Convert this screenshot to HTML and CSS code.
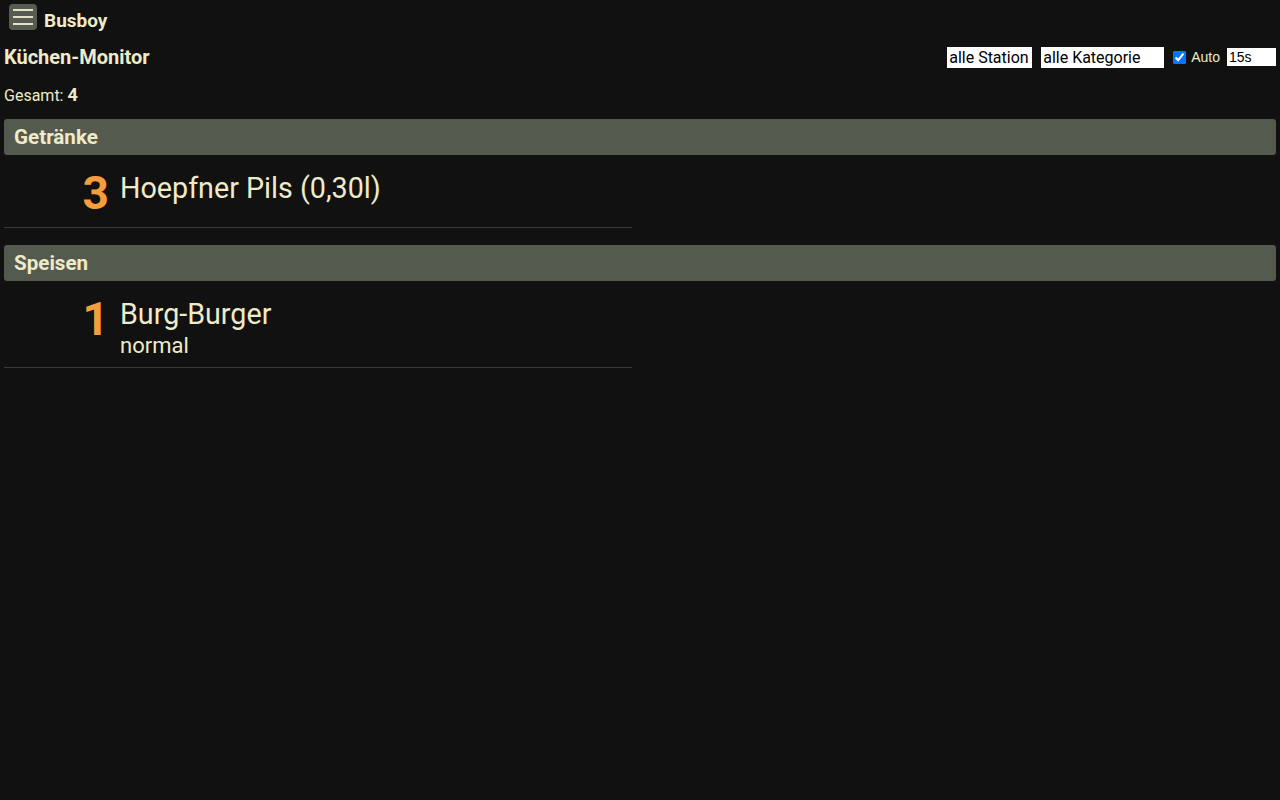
FILE: index.html
```html
<!DOCTYPE html>
<html lang="de">
<head>
<meta charset="utf-8">
<title>Busboy – Küchen-Monitor</title>
<link rel="stylesheet" href="styles.css">
</head>
<body>
<header class="topbar">
  <button class="menu-btn" aria-label="Menü">
    <svg width="20" height="18" viewBox="0 0 20 18"><path d="M0 2h20M0 9h20M0 16h20" stroke="#e3e1c8" stroke-width="2" fill="none"/></svg>
  </button>
  <span class="brand">Busboy</span>
</header>
<div class="titlebar">
  <h1 class="title">Küchen-Monitor</h1>
  <div class="controls">
    <select class="sel sel-station"><option>alle Station</option></select>
    <select class="sel sel-cat"><option>alle Kategorie</option></select>
    <label class="auto"><input type="checkbox" checked> Auto</label>
    <input class="interval" type="text" value="15s">
  </div>
</div>
<div class="total">Gesamt: <b>4</b></div>

<section class="cat">
  <h2 class="cat-head">Getränke</h2>
  <div class="item">
    <div class="qty">3</div>
    <div class="desc"><div class="name">Hoepfner Pils (0,30l)</div></div>
  </div>
</section>

<section class="cat">
  <h2 class="cat-head">Speisen</h2>
  <div class="item">
    <div class="qty">1</div>
    <div class="desc"><div class="name">Burg-Burger</div><div class="note">normal</div></div>
  </div>
</section>
</body>
</html>
```

FILE: styles.css
```css
html, body { background: #111111; }
body {
  margin: 0;
  padding: 0 4px;
  font-family: Roboto, "Liberation Sans", sans-serif;
  color: #efebc9;
}
.topbar {
  display: flex;
  align-items: center;
  gap: 7px;
  padding: 4px 0 0 5px;
  height: 26px;
}
.menu-btn {
  width: 28px;
  height: 26px;
  border: 0;
  border-radius: 4px;
  background: #575c52;
  padding: 0;
  display: flex;
  align-items: center;
  justify-content: center;
}
.brand { font-weight: 700; font-size: 19px; margin-top: 6px; }
.titlebar {
  display: flex;
  justify-content: space-between;
  align-items: center;
  margin-top: 16px;
  height: 22px;
}
.title { margin: 0; font-size: 20px; font-weight: 700; }
.controls { display: flex; align-items: center; }
.sel {
  appearance: none;
  -webkit-appearance: none;
  background: #fff;
  color: #000;
  border: 0;
  border-radius: 0;
  font-family: Roboto, "Liberation Sans", sans-serif;
  font-size: 16px;
  height: 21px;
  padding: 0 2px;
  margin-right: 9px;
}
.sel-station { width: 85px; }
.sel-cat { width: 123px; }
.auto { display: flex; align-items: center; font-size: 14px; font-family: "Liberation Sans", sans-serif; gap: 3px; margin-right: 7px; }
.auto input { margin: 0 2px 0 0; width: 13px; height: 13px; }
.interval {
  width: 49px;
  height: 18px;
  box-sizing: border-box;
  border: 0;
  padding: 0 2px;
  font-size: 14px;
  font-family: "Liberation Sans", sans-serif;
}
.total { margin-top: 16px; font-size: 16px; height: 20px; }
.total b { font-size: 18px; }
.cat { margin-top: 15px; }
.cat + .cat { margin-top: 17px; }
.cat-head {
  margin: 0;
  background: #555a4f;
  border-radius: 3px;
  height: 36px;
  line-height: 36px;
  padding: 0 10px;
  font-size: 20.6px;
  font-weight: 700;
}
.item {
  width: 628px;
  display: flex;
  gap: 11px;
  border-bottom: 1px solid #3a3a3a;
  padding: 14px 0 10px;
}
.qty {
  width: 105px;
  text-align: right;
  color: #f59d3d;
  font-weight: 700;
  font-size: 46px;
  line-height: 48px;
}
.desc { padding-top: 2px; }
.name { font-size: 28.7px; line-height: 34px; }
.note { font-size: 22px; line-height: 26px; margin-top: 2px; margin-bottom: -2px; }
```
